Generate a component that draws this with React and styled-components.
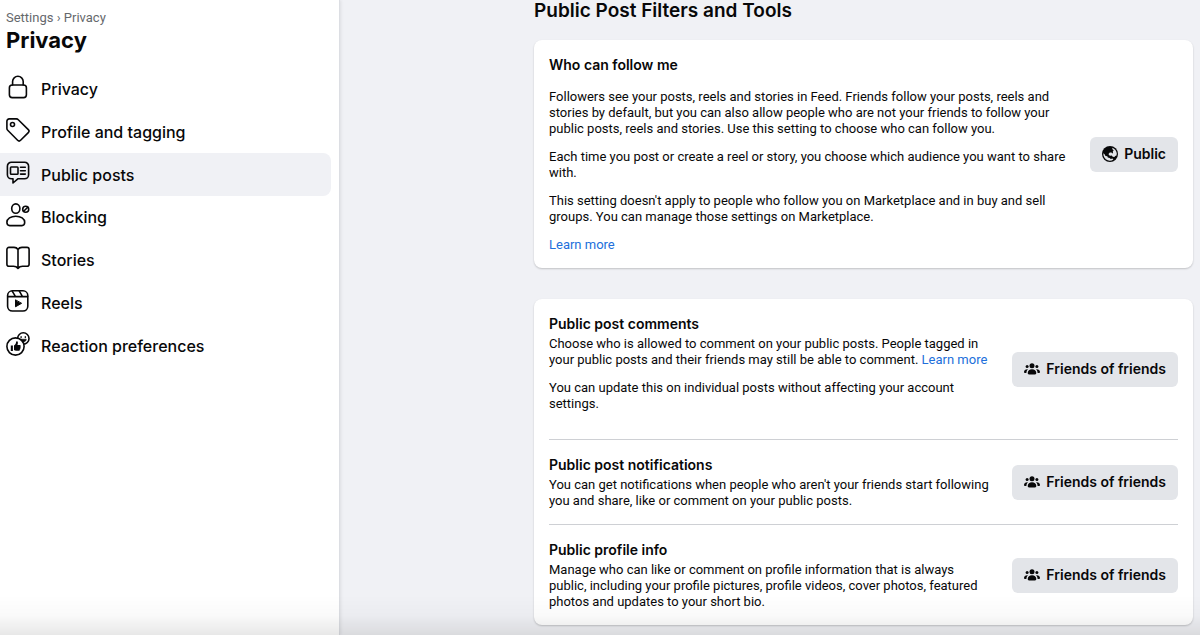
import React, { useState } from 'react';
import styled, { createGlobalStyle } from 'styled-components';

const GlobalStyle = createGlobalStyle`
  * {
    box-sizing: border-box;
  }
  body {
    margin: 0;
    background: #f0f1f5;
    color: #080809;
    font-family: Inter, 'Liberation Sans', sans-serif;
    font-size: 13px;
    line-height: 16px;
  }
`;

const Page = styled.div`
  display: flex;
  min-height: 100vh;
`;
const Sidebar = styled.aside`
  flex: 0 0 340px;
  padding: 10px 8px 0 0;
  background: #fff;
  border-right: 1px solid #dcdee3;
  box-shadow: 1px 0 3px rgba(0, 0, 0, 0.08);
`;
const SidebarHeader = styled.header`
  padding-left: 6px;
`;
const Breadcrumb = styled.nav`
  color: #65686c;
  font-family: Roboto, 'Liberation Sans', sans-serif;
`;
const CrumbLink = styled.a`
  color: inherit;
  text-decoration: none;
`;
const SidebarTitle = styled.h1`
  margin: 0 0 14px;
  font-size: 22px;
  line-height: 28px;
  font-weight: 700;
`;
const MenuList = styled.ul`
  display: grid;
  grid-template-rows: repeat(7, 1fr);
  height: 299px;
  margin: 0;
  padding: 0;
  list-style: none;
`;
const MenuLink = styled.a`
  display: flex;
  align-items: center;
  gap: 11px;
  height: 100%;
  padding-left: 6px;
  border-radius: 0 8px 8px 0;
  background: ${(props) => (props.$active ? '#f0f1f5' : 'transparent')};
  color: inherit;
  font-size: 16px;
  line-height: 20px;
  font-weight: 500;
  text-decoration: none;
`;
const MenuIcon = styled.svg`
  flex: none;
  width: 24px;
  height: 24px;
  margin-bottom: 4px;
  fill: none;
  stroke: #080809;
  stroke-width: 1.6;
  stroke-linecap: round;
  stroke-linejoin: round;
`;
const Content = styled.main`
  flex: 1;
  min-width: 0;
  padding: 0 7px 9px 194px;
`;
const ContentTitle = styled.h2`
  margin: 0 0 18px;
  font-size: 19px;
  line-height: 22px;
  font-weight: 600;
`;
const Card = styled.section`
  margin-bottom: 31px;
  padding: 0 15px;
  border-radius: 8px;
  background: #fff;
  box-shadow: 0 1px 2px rgba(0, 0, 0, 0.2);

  &:last-child {
    margin-bottom: 0;
  }
`;
const Setting = styled.div`
  display: flex;
  align-items: center;
  gap: 20px;
  padding: 15px 0;

  & + & {
    border-top: 1px solid #ced0d4;
  }
`;
const SettingBody = styled.div`
  flex: 1;
  min-width: 0;
  padding-bottom: ${(props) => (props.$roomy ? '12px' : '0')};
`;
const SettingTitle = styled.h3`
  margin: 0 0 ${(props) => (props.$spaced ? '14px' : '2px')};
  font-size: 14px;
  line-height: 20px;
  font-weight: 600;
`;
const Paragraph = styled.p`
  margin: 0;
  font-family: Roboto, 'Liberation Sans', sans-serif;

  & + & {
    margin-top: 12px;
  }
`;
const TextLink = styled.a`
  color: #216fdb;
  text-decoration: none;
`;
const AudienceButton = styled.button`
  display: flex;
  flex: none;
  align-items: center;
  gap: 6px;
  height: 35px;
  padding: 0 12px;
  border: 0;
  border-radius: 6px;
  background: #e3e5e9;
  color: #080809;
  font: 600 14px/20px Inter, 'Liberation Sans', sans-serif;
  cursor: pointer;
`;
const ButtonIcon = styled.svg`
  width: 16px;
  height: 16px;
  fill: #080809;
`;
const BottomShade = styled.div`
  position: fixed;
  right: 0;
  bottom: 0;
  left: 0;
  height: 40px;
  background: linear-gradient(rgba(0, 0, 0, 0), rgba(0, 0, 0, 0.02) 50%, rgba(0, 0, 0, 0.09));
  pointer-events: none;
`;

const menuItems = [
  {
    label: 'Privacy',
    icon: (
      <>
        <rect x="3.4" y="10" width="17" height="12.6" rx="2.8" />
        <path d="M6.6 10V6.6a5.3 5.3 0 0 1 10.6 0V10" />
      </>
    ),
  },
  {
    label: 'Profile and tagging',
    icon: (
      <>
        <path d="M.9 3.2v7.2c0 .7.3 1.4.8 1.900l9.900 10c.9.9 2.100.9 3 0l7.700-7.700c.9-.9.9-2.100 0-3L12.300 1.700c-.5-.5-1.200-.8-1.900-.8H3.200A2.300 2.300 0 0 0 .9 3.200z" />
        <circle cx="6.5" cy="6.5" r="2" />
      </>
    ),
  },
  {
    label: 'Public posts',
    icon: (
      <>
        <path d="M5.400 1.200h13.200a4 4 0 0 1 4 4v8.600a4 4 0 0 1-4 4h-6.800L7 22V17.800H5.400a4 4 0 0 1-4-4V5.200a4 4 0 0 1 4-4z" />
        <rect x="4.5" y="6" width="7.5" height="7.2" rx="0.8" />
        <path d="M14.500 6.200h4.800M14.500 9.700h4.800M14.500 13.100h4.800" />
      </>
    ),
  },
  {
    label: 'Blocking',
    icon: (
      <>
        <ellipse cx="9.8" cy="5.6" rx="4.1" ry="4.7" />
        <path d="M9.800 13.200c-5 0-8.900 2.500-8.900 6.100 0 2.200 1 3.300 2.800 3.300h12.200c1.800 0 2.800-1.100 2.800-3.300 0-3.600-3.900-6.100-8.900-6.100z" />
        <circle cx="19.7" cy="6.2" r="3" />
        <path d="M17.700 8.200l4-4" />
      </>
    ),
  },
  {
    label: 'Stories',
    icon: (
      <path d="M12 3.500v18.800M12 3.500C11 1.900 9.600 1.400 8 1.400H3A2.100 2.100 0 0 0 .9 3.500v14.800c0 1.300.9 2 2.100 2h4.500c1.900 0 3.300.5 4.500 2.100 1.200-1.600 2.600-2.100 4.500-2.100H21c1.200 0 2.100-.7 2.100-2V3.500A2.100 2.100 0 0 0 21 1.400h-5c-1.600 0-3 .5-4 2.100z" />
    ),
  },
  {
    label: 'Reels',
    icon: (
      <>
        <rect x="1.6" y="1.8" width="20.2" height="20.2" rx="4.8" />
        <path d="M1.800 7.600h19.800M6.200 2.200l3.200 5.200M13.200 1.900l3.200 5.500" />
        <path fill="#080809" strokeWidth="1" d="M9.500 11.200v6.600l5.800-3.300z" />
      </>
    ),
  },
  {
    label: 'Reaction preferences',
    icon: (
      <>
        <circle cx="17.3" cy="6.5" r="5.7" />
        <path strokeWidth="1.3" d="M15.100 4.700v.8M19.300 4.700v.8" />
        <path fill="#080809" strokeWidth="0.5" d="M14.500 7.200h5.800c-.3 3.600-5.500 3.600-5.800 0z" />
        <circle cx="9.5" cy="14.5" r="8.6" fill="#fff" />
        <path
          fill="#080809"
          stroke="none"
          d="M4.800 13.400h2.100v5.500H4.800zM8 13.400c1.400-.8 2-1.900 2.100-3.400.1-1.100 1.800-.9 1.800.8 0 .9-.2 1.400-.5 2.100h2.300c1 0 1.300.9.800 1.600.4.600.3 1.100-.2 1.500.3.600.1 1.100-.5 1.400.1.900-.4 1.400-1.200 1.400h-2.300c-1 0-1.700-.2-2.300-.7z"
        />
      </>
    ),
  },
];

function GlobeIcon() {
  return (
    <ButtonIcon viewBox="0 0 16 16" aria-hidden="true">
      <circle cx="8" cy="8" r="8" />
      <path
        fill="#e3e5e9"
        d="M10.300 1.700c2.500.9 4.300 3.200 4.500 5.900l-.3 2-1.300.3-.8 1.200-1.700-.3-.9-1.300-1.500.3-1.200-.6-.6-1.300 1.300-1.300 1.800-.2.5 1 .9-.3-.2-1.700.9-1.200-1.300-.9z"
      />
      <path
        fill="#e3e5e9"
        d="M1.300 7.200l1.300 1.100.9 1.700 1.800.3.500 1.200 1.800.5 1.200 1.100 1.700-.6.9.9c-1.600 1.200-3.700 1.600-5.700.9-2.800-1-4.600-3.900-4.400-7.100z"
      />
    </ButtonIcon>
  );
}

function FriendsIcon() {
  return (
    <ButtonIcon viewBox="0 0 16 16" aria-hidden="true">
      <circle cx="8" cy="4.7" r="2.5" />
      <circle cx="3.1" cy="5.6" r="1.5" />
      <circle cx="12.9" cy="5.6" r="1.5" />
      <path d="M8 8.200c-2.500 0-4.300 1.500-4.300 3.800 0 .9.500 1.400 1.300 1.400h6c.8 0 1.300-.5 1.300-1.400 0-2.300-1.800-3.800-4.300-3.800z" />
      <path d="M4 8.200C1.600 7.900 0 9.200 0 11.100c0 .6.300.9.900.9h1.500c0-1.500.5-2.800 1.600-3.800zM12 8.200c2.400-.3 4 1 4 2.900 0 .6-.3.900-.9.900h-1.500c0-1.500-.5-2.800-1.600-3.800z" />
    </ButtonIcon>
  );
}

function FriendsButton() {
  return (
    <AudienceButton type="button">
      <FriendsIcon />
      Friends of friends
    </AudienceButton>
  );
}

function App() {
  const [active, setActive] = useState('Public posts');

  return (
    <React.Fragment>
      <GlobalStyle />
      <Page>
        <Sidebar>
          <SidebarHeader>
            <Breadcrumb>
              <CrumbLink href="#settings">Settings</CrumbLink> › <CrumbLink href="#privacy">Privacy</CrumbLink>
            </Breadcrumb>
            <SidebarTitle>Privacy</SidebarTitle>
          </SidebarHeader>
          <MenuList>
            {menuItems.map((item) => (
              <li key={item.label}>
                <MenuLink
                  href="#"
                  $active={item.label === active}
                  onClick={() => setActive(item.label)}
                >
                  <MenuIcon viewBox="0 0 24 24" aria-hidden="true">
                    {item.icon}
                  </MenuIcon>
                  {item.label}
                </MenuLink>
              </li>
            ))}
          </MenuList>
        </Sidebar>
        <Content>
          <ContentTitle>Public Post Filters and Tools</ContentTitle>
          <Card>
            <Setting>
              <SettingBody>
                <SettingTitle $spaced>Who can follow me</SettingTitle>
                <Paragraph>
                  Followers see your posts, reels and stories in Feed. Friends follow your posts, reels
                  and stories by default, but you can also allow people who are not your friends to
                  follow your public posts, reels and stories. Use this setting to choose who can follow
                  you.
                </Paragraph>
                <Paragraph>
                  Each time you post or create a reel or story, you choose which audience you want to
                  share with.
                </Paragraph>
                <Paragraph>
                  This setting doesn&apos;t apply to people who follow you on Marketplace and in buy and
                  sell groups. You can manage those settings on Marketplace.
                </Paragraph>
                <Paragraph>
                  <TextLink href="#learn">Learn more</TextLink>
                </Paragraph>
              </SettingBody>
              <AudienceButton type="button">
                <GlobeIcon />
                Public
              </AudienceButton>
            </Setting>
          </Card>
          <Card>
            <Setting>
              <SettingBody $roomy>
                <SettingTitle>Public post comments</SettingTitle>
                <Paragraph>
                  Choose who is allowed to comment on your public posts. People tagged in your public
                  posts and their friends may still be able to comment.{' '}
                  <TextLink href="#learn">Learn more</TextLink>
                </Paragraph>
                <Paragraph>
                  You can update this on individual posts without affecting your account settings.
                </Paragraph>
              </SettingBody>
              <FriendsButton />
            </Setting>
            <Setting>
              <SettingBody>
                <SettingTitle>Public post notifications</SettingTitle>
                <Paragraph>
                  You can get notifications when people who aren&apos;t your friends start following you
                  and share, like or comment on your public posts.
                </Paragraph>
              </SettingBody>
              <FriendsButton />
            </Setting>
            <Setting>
              <SettingBody>
                <SettingTitle>Public profile info</SettingTitle>
                <Paragraph>
                  Manage who can like or comment on profile information that is always public, including
                  your profile pictures, profile videos, cover photos, featured photos and updates to
                  your short bio.
                </Paragraph>
              </SettingBody>
              <FriendsButton />
            </Setting>
          </Card>
        </Content>
      </Page>
      <BottomShade />
    </React.Fragment>
  );
}

export default App;
